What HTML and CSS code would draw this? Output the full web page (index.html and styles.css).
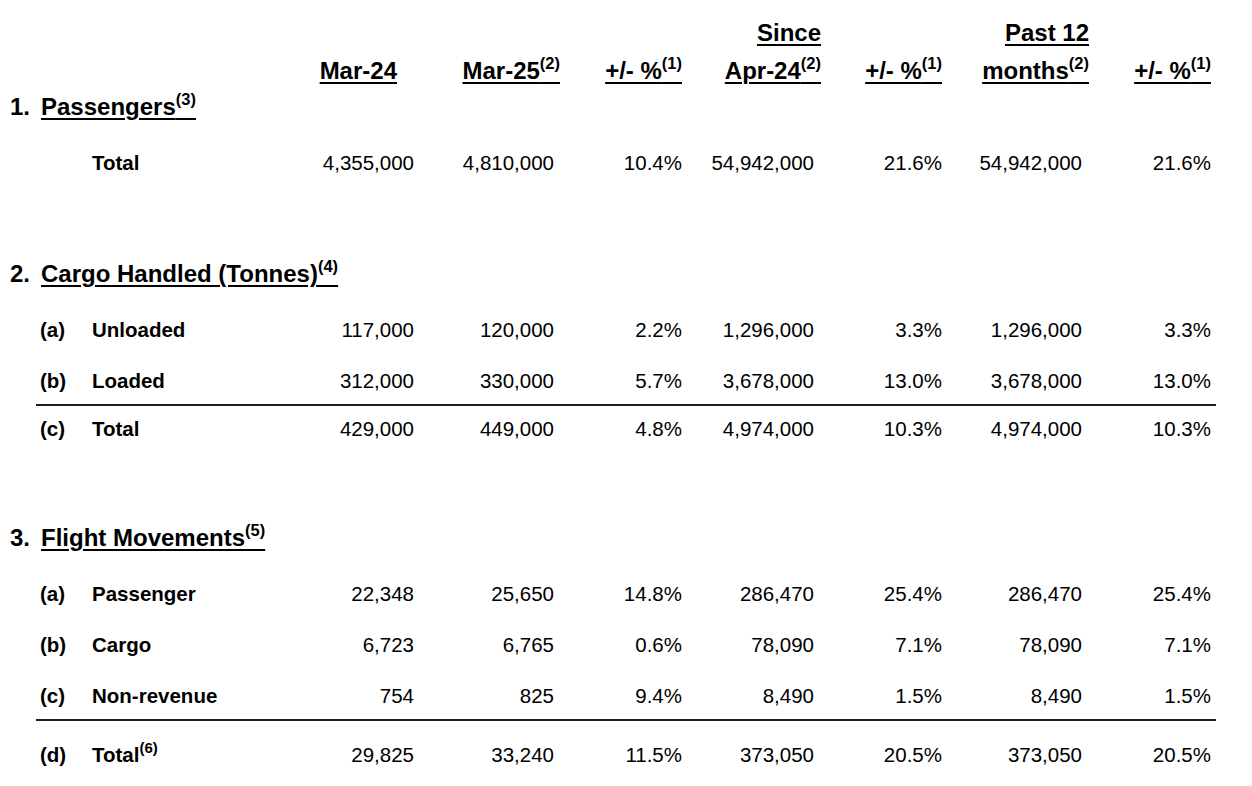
FILE: index.html
```html
<!DOCTYPE html>
<html>
<head>
<meta charset="utf-8">
<link rel="stylesheet" href="styles.css">
</head>
<body>
<div class="sheet">
  <div class="grid head">
    <div></div>
    <div class="hc pad17"><span class="u">Mar-24</span></div>
    <div class="hc ov6"><span class="u">Mar-25<sup>(2)</sup></span></div>
    <div class="hc"><span class="u">+/- %<sup>(1)</sup></span></div>
    <div class="hc ov7"><span class="u">Since</span><br><span class="u">Apr-24<sup>(2)</sup></span></div>
    <div class="hc"><span class="u">+/- %<sup>(1)</sup></span></div>
    <div class="hc ov7"><span class="u">Past 12</span><br><span class="u">months<sup>(2)</sup></span></div>
    <div class="hc"><span class="u">+/- %<sup>(1)</sup></span></div>
  </div>

  <div class="sec"><span class="n">1.</span><span class="u">Passengers<sup>(3)</sup></span></div>
  <div class="grid row first">
    <div class="lab"><span class="tag"></span><span>Total</span></div>
    <div class="v">4,355,000</div><div class="v">4,810,000</div><div class="v">10.4%</div>
    <div class="v">54,942,000</div><div class="v">21.6%</div><div class="v">54,942,000</div><div class="v">21.6%</div>
  </div>

  <div class="sec gap"><span class="n">2.</span><span class="u">Cargo Handled (Tonnes)<sup>(4)</sup></span></div>
  <div class="grid row first">
    <div class="lab"><span class="tag">(a)</span><span>Unloaded</span></div>
    <div class="v">117,000</div><div class="v">120,000</div><div class="v">2.2%</div>
    <div class="v">1,296,000</div><div class="v">3.3%</div><div class="v">1,296,000</div><div class="v">3.3%</div>
  </div>
  <div class="grid row">
    <div class="lab"><span class="tag">(b)</span><span>Loaded</span></div>
    <div class="v">312,000</div><div class="v">330,000</div><div class="v">5.7%</div>
    <div class="v">3,678,000</div><div class="v">13.0%</div><div class="v">3,678,000</div><div class="v">13.0%</div>
  </div>
  <div class="grid row total">
    <div class="lab"><span class="tag">(c)</span><span>Total</span></div>
    <div class="v">429,000</div><div class="v">449,000</div><div class="v">4.8%</div>
    <div class="v">4,974,000</div><div class="v">10.3%</div><div class="v">4,974,000</div><div class="v">10.3%</div>
  </div>

  <div class="sec gap"><span class="n">3.</span><span class="u">Flight Movements<sup>(5)</sup></span></div>
  <div class="grid row first">
    <div class="lab"><span class="tag">(a)</span><span>Passenger</span></div>
    <div class="v">22,348</div><div class="v">25,650</div><div class="v">14.8%</div>
    <div class="v">286,470</div><div class="v">25.4%</div><div class="v">286,470</div><div class="v">25.4%</div>
  </div>
  <div class="grid row">
    <div class="lab"><span class="tag">(b)</span><span>Cargo</span></div>
    <div class="v">6,723</div><div class="v">6,765</div><div class="v">0.6%</div>
    <div class="v">78,090</div><div class="v">7.1%</div><div class="v">78,090</div><div class="v">7.1%</div>
  </div>
  <div class="grid row">
    <div class="lab"><span class="tag">(c)</span><span>Non-revenue</span></div>
    <div class="v">754</div><div class="v">825</div><div class="v">9.4%</div>
    <div class="v">8,490</div><div class="v">1.5%</div><div class="v">8,490</div><div class="v">1.5%</div>
  </div>
  <div class="grid row total last">
    <div class="lab"><span class="tag">(d)</span><span>Total<sup class="sm">(6)</sup></span></div>
    <div class="v">29,825</div><div class="v">33,240</div><div class="v">11.5%</div>
    <div class="v">373,050</div><div class="v">20.5%</div><div class="v">373,050</div><div class="v">20.5%</div>
  </div>
</div>
</body>
</html>
```

FILE: styles.css
```css
html, body {
  margin: 0;
  padding: 0;
  background: #fff;
}
body {
  font-family: "Liberation Sans", Arial, sans-serif;
  color: #000;
}
.sheet {
  width: 1252px;
  height: 786px;
  overflow: hidden;
}
.grid {
  display: grid;
  grid-template-columns: 264px 114px 140px 128px 132px 128px 140px 129px 5px;
  margin-left: 36px;
  width: 1180px;
}
.head {
  margin-top: 14px;
  height: 76px;
  font-size: 24px;
  font-weight: bold;
  line-height: 38px;
  align-items: end;
}
.hc {
  text-align: right;
  white-space: nowrap;
}
.pad17 { padding-right: 17px; }
.ov6 { margin-right: -6px; }
.ov7 { margin-right: -7px; }
.u {
  text-decoration: underline;
  text-decoration-thickness: 2px;
  text-underline-offset: 3px;
}
sup {
  font-size: 16.5px;
  line-height: 0;
  vertical-align: 10px;
}
sup.sm {
  font-size: 15px;
  vertical-align: 9px;
}
.sec {
  display: flex;
  align-items: center;
  height: 34px;
  padding-left: 10px;
  font-size: 24px;
  font-weight: bold;
}
.sec .n { width: 31px; }
.sec.gap { margin-top: 69px; }
.row {
  height: 51px;
  align-items: center;
  font-size: 20.5px;
}
.row.first { margin-top: 13px; }
.v { text-align: right; white-space: nowrap; }
.lab {
  display: flex;
  padding-left: 4px;
  font-weight: bold;
  white-space: nowrap;
}
.tag { width: 52px; }
.total {
  box-sizing: border-box;
  height: 48px;
  margin-top: -2px;
  border-top: 2px solid #1e1e1e;
}
.total.last {
  height: 66px;
  padding-top: 4px;
}
```
